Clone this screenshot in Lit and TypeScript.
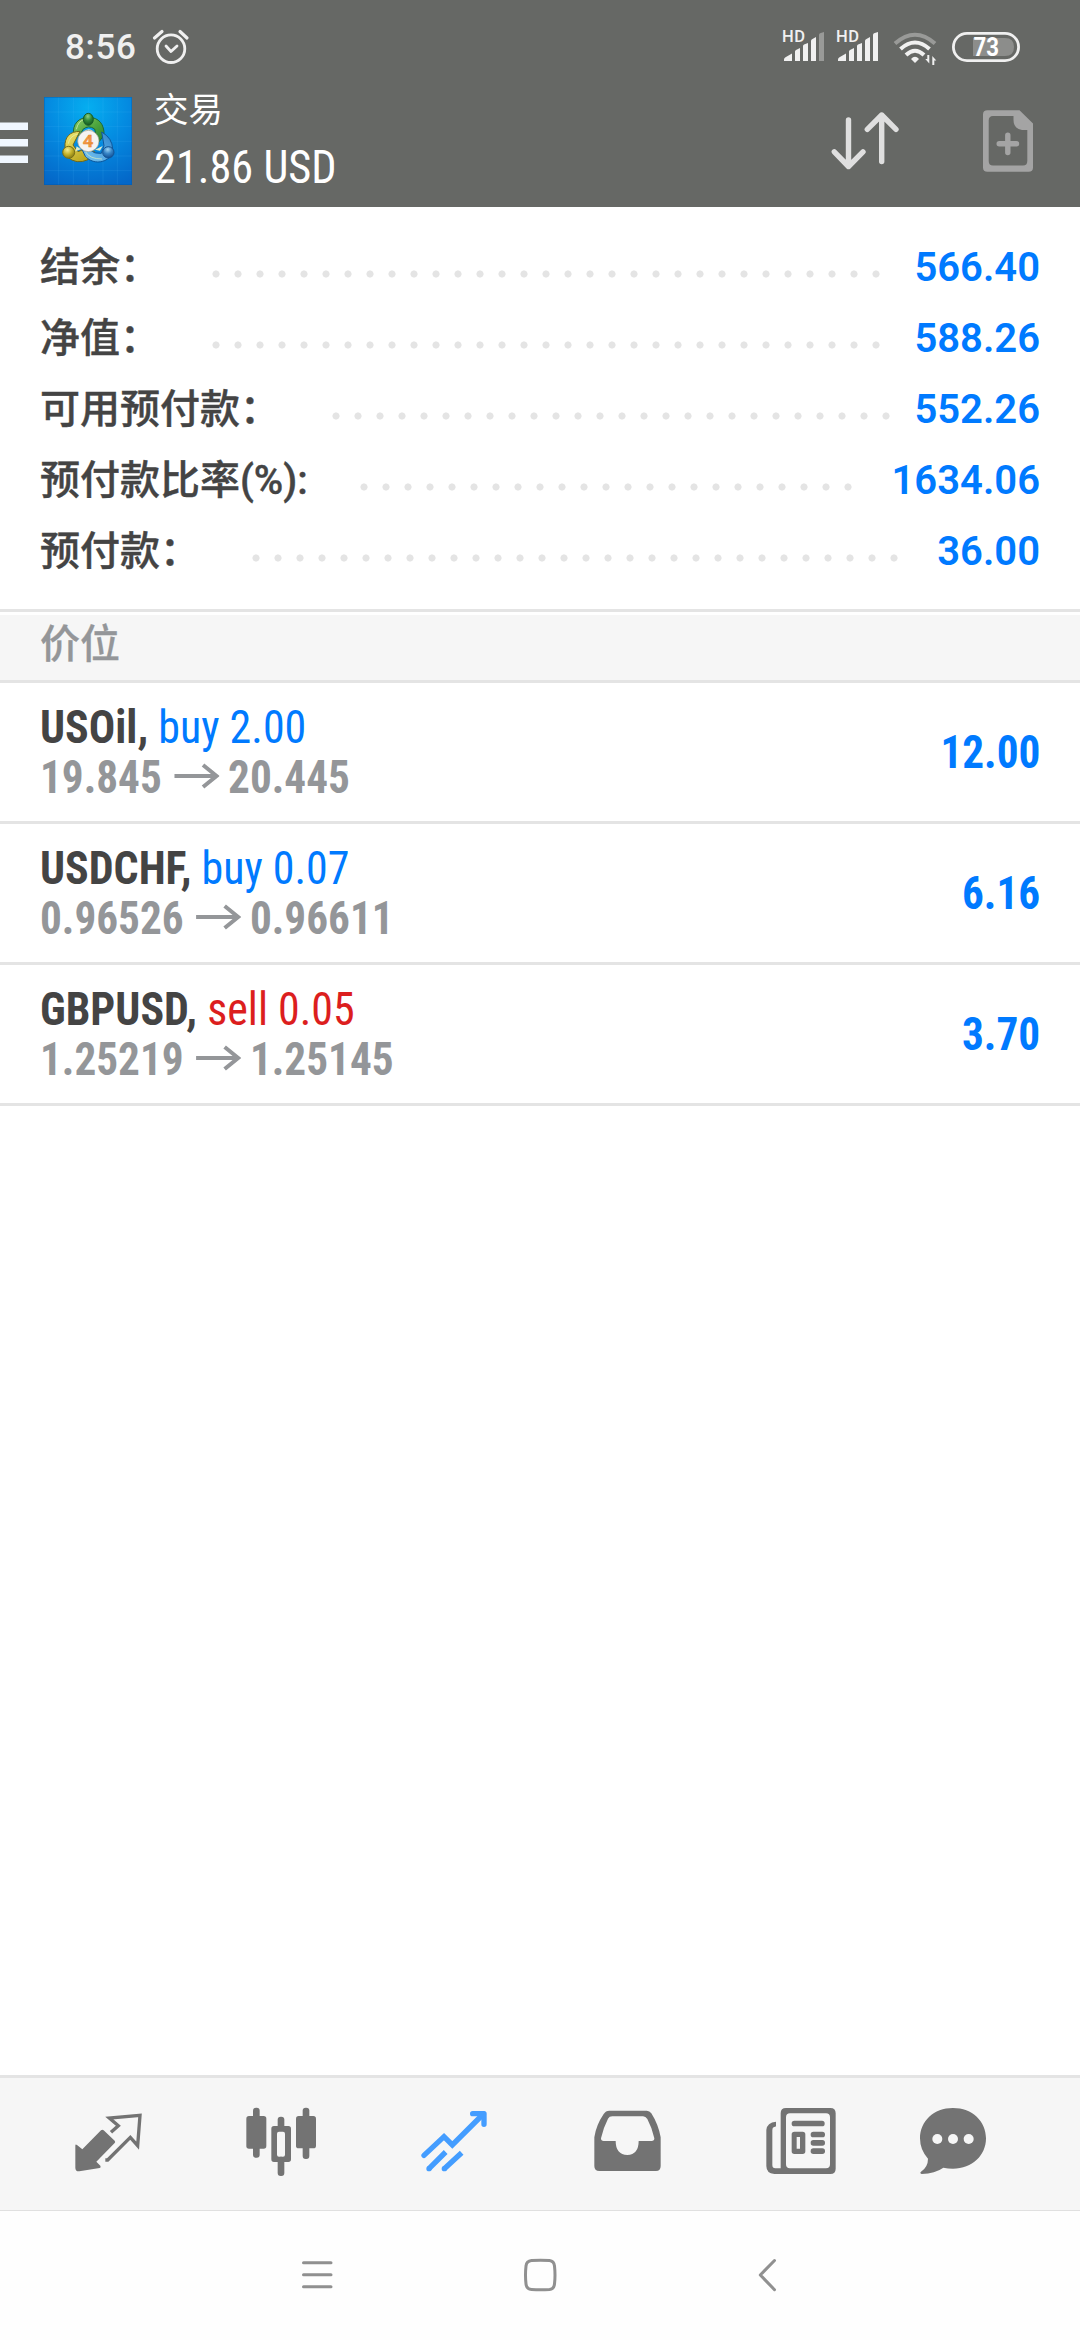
import { LitElement, html, css, svg } from "lit";
import { customElement } from "lit/decorators.js";

interface Metric { label: string; value: string; }
interface Position { symbol: string; side: "buy" | "sell"; volume: string; open: string; current: string; profit: string; }

const METRICS: Metric[] = [
  { label: "结余：", value: "566.40" },
  { label: "净值：", value: "588.26" },
  { label: "可用预付款：", value: "552.26" },
  { label: "预付款比率(%):", value: "1634.06" },
  { label: "预付款：", value: "36.00" },
];

const POSITIONS: Position[] = [
  { symbol: "USOil", side: "buy", volume: "2.00", open: "19.845", current: "20.445", profit: "12.00" },
  { symbol: "USDCHF", side: "buy", volume: "0.07", open: "0.96526", current: "0.96611", profit: "6.16" },
  { symbol: "GBPUSD", side: "sell", volume: "0.05", open: "1.25219", current: "1.25145", profit: "3.70" },
];

@customElement("status-bar")
class StatusBar extends LitElement {
  static styles = css`
    :host { display: flex; height: 80px; align-items: flex-start; justify-content: space-between; color: #f0f0f0; }
    .left { display: flex; padding-left: 65px; }
    .clock { font: 500 35px/40px Roboto, sans-serif; margin-top: 28px; width: 87px; letter-spacing: 0.7px; white-space: nowrap; }
    svg { display: block; }
    .hd { font: 500 16.5px Roboto, sans-serif; fill: #f0f0f0; }
    .level { font: 700 25px Roboto, sans-serif; fill: #fff; }
  `;
  private signal(dim: boolean) {
    return svg`
      <text class="hd" x="-1" y="42" textLength="23">HD</text>
      <path d="M1 61v-1.5q0-1.5 1.5-2.3L9 53.500V61z M12 61V51.500q0-1 1-1.600L17 48V61z M20 61V46q0-1 1-1.500L25 43V61z M28 61V41q0-1 1-1.700L33 37V61z" fill="#f0f0f0"/>
      <path d="M36 61V35q0-1 1-1.700L41 32V61z" fill=${dim ? "#999a98" : "#f0f0f0"}/>`;
  }
  render() {
    return html`
      <div class="left">
        <div class="clock">8:56</div>
        <svg width="38" height="80" viewBox="152 0 38 80" fill="none" stroke="#f0f0f0" stroke-width="2.8" stroke-linecap="round" stroke-linejoin="round">
          <circle cx="171" cy="48.700" r="13.800"/>
          <path d="M166 46l5 5.500 6-5.500"/>
          <path d="M154.500 38l7.500-6.500M180 31.500l7 6.500" stroke-width="3.200"/>
        </svg>
      </div>
      <svg width="300" height="80" viewBox="780 0 300 80">
        <g transform="translate(783 0)">${this.signal(true)}</g>
        <g transform="translate(837 0)">${this.signal(false)}</g>
        <g fill="none" stroke-width="4">
          <path d="M895 43.500Q915 26 935 43.500" stroke="#999a98"/>
          <path d="M900.500 49Q915 36 929.500 49" stroke="#f0f0f0"/>
          <path d="M906 55Q915 46.500 924 55" stroke="#f0f0f0"/>
        </g>
        <path d="M911 59Q915 54.500 919 59L915 63z" fill="#f0f0f0"/>
        <path d="M929.300 55v8.500l-4-4.500h2V55zM932.300 65v-9l4 4.500h-2V65z" fill="#f0f0f0"/>
        <path d="M973 38h32q9 0 9 9t-9 9h-32z" fill="#8c8d8b"/>
        <rect x="953.400" y="33.400" width="65.200" height="27.200" rx="13.600" fill="none" stroke="#f0f0f0" stroke-width="2.800"/>
        <text class="level" x="973.500" y="56" textLength="25.500" lengthAdjust="spacingAndGlyphs">73</text>
      </svg>`;
  }
}

@customElement("app-logo")
class AppLogo extends LitElement {
  static styles = css`
    :host { display: block; width: 88px; height: 88px; }
    svg { display: block; }
    .four { font: 700 52px Roboto, sans-serif; }
  `;
  render() {
    return html`<svg width="88" height="88" viewBox="42 36 264 264">
      <defs>
        <radialGradient id="bg" cx=".5" cy=".12" r=".95"><stop offset="0" stop-color="#05aef0"/><stop offset=".5" stop-color="#0489e0"/><stop offset="1" stop-color="#0467c8"/></radialGradient>
        <linearGradient id="g" x1="0" y1="0" x2="1" y2="1"><stop offset="0" stop-color="#93d069"/><stop offset=".5" stop-color="#4fa73f"/><stop offset="1" stop-color="#247c2e"/></linearGradient>
        <linearGradient id="y" x1="0" y1="0" x2=".6" y2="1"><stop offset="0" stop-color="#f2e873"/><stop offset="1" stop-color="#b9a51c"/></linearGradient>
        <linearGradient id="b" x1="1" y1="0" x2="0" y2="1"><stop offset="0" stop-color="#2d84cc"/><stop offset="1" stop-color="#7cc9f4"/></linearGradient>
        <radialGradient id="gh" cx=".45" cy=".25" r=".75"><stop offset="0" stop-color="#8fd084"/><stop offset=".5" stop-color="#2f8939"/><stop offset="1" stop-color="#12561f"/></radialGradient>
        <radialGradient id="yh" cx=".4" cy=".3" r=".75"><stop offset="0" stop-color="#f3eb91"/><stop offset=".5" stop-color="#c5b32b"/><stop offset="1" stop-color="#7f7410"/></radialGradient>
        <radialGradient id="bh" cx=".45" cy=".25" r=".75"><stop offset="0" stop-color="#9bd3f4"/><stop offset=".5" stop-color="#3684c6"/><stop offset="1" stop-color="#124e91"/></radialGradient>
      </defs>
      <rect x="42" y="36" width="264" height="264" fill="url(#bg)"/>
      <path d="M86 36V300M130 36V300M175 36V300M219 36V300M262 36V300M42 81H306M42 125H306M42 169H306M42 213H306M42 257H306" stroke="#62c2ff" stroke-opacity=".15" stroke-width="2.500"/>
      <rect x="43" y="37" width="262" height="262" fill="none" stroke="#0758a5" stroke-opacity=".6" stroke-width="2"/>
      <g stroke-width="3" stroke-linejoin="round">
        <path d="M131 151C126 117 146 97 176 97S224 118 222 151L204 174 194 132Q176 119 159 133L149 153z" fill="url(#g)" stroke="#1d6837"/>
        <path d="M150 139C119 139 103 157 105 187L112 216Q140 240 174 224L194 200 170 190 144 200 129 180z" fill="url(#y)" stroke="#6e681b"/>
        <path d="M215 141Q247 159 248 192L242 214C218 239 184 234 166 214L153 187 177 193Q194 208 214 205L222 182z" fill="url(#b)" stroke="#0d579c"/>
        <path d="M139 133Q145 107 164 103M115 176Q119 153 143 147M167 201Q179 222 216 222" fill="none" stroke="#e5f5bd" stroke-opacity=".65"/>
        <path d="M162 139Q177 126 190 139M136 199L140 184 153 193M218 183L210 197 195 194" fill="#dcebd0" stroke="none"/>
        <ellipse cx="175" cy="103" rx="15" ry="18" fill="url(#gh)" stroke="#175d29"/>
        <circle cx="116" cy="202" r="18" fill="url(#yh)" stroke="#786f18"/>
        <circle cx="235" cy="202" r="17" fill="url(#bh)" stroke="#135394"/>
      </g>
      <circle cx="175" cy="168" r="32" fill="#f5f4f2" stroke="#9d9d88" stroke-width="2"/>
      <text class="four" x="174" y="187" text-anchor="middle" textLength="32" lengthAdjust="spacingAndGlyphs" fill="#f39a48" stroke="#e58020" stroke-width="1">4</text>
    </svg>`;
  }
}

@customElement("title-bar")
class TitleBar extends LitElement {
  static styles = css`
    :host { display: flex; height: 127px; color: #fff; }
    svg { display: block; flex: none; }
    app-logo { margin: 17px 0 0 16px; }
    .titles { margin-left: 22px; flex: 1; }
    .page { font: 400 34.5px/40px "Noto Sans CJK SC", sans-serif; margin-top: 7px; }
    .total { font: 400 46px/54px "Roboto Condensed", Roboto, sans-serif; font-stretch: 75%; margin-top: 13px; white-space: nowrap; transform: scaleX(0.964); transform-origin: 0 0; }
  `;
  render() {
    return html`
      <svg width="28" height="127" viewBox="0 80 28 127" fill="#f0f7ff"><path d="M0 122.500H28V130H0zM0 139H28V146.500H0zM0 155.500H28V163H0z"/></svg>
      <app-logo></app-logo>
      <div class="titles"><div class="page">交易</div><div class="total">21.86 USD</div></div>
      <svg width="260" height="127" viewBox="820 80 260 127" fill="none" stroke-linecap="round" stroke-linejoin="round">
        <path d="M848.500 120V166.500M834.300 151.800L848.500 166.500 863 151.800M881.700 161.500V115M867.300 129.300L881.700 115 896 129.300" stroke="#dfdfdf" stroke-width="5.400"/>
        <path fill-rule="evenodd" d="M987.500 110.300H1019.500L1033 123.500V167.500Q1033 171.800 1028.500 171.800H987.500Q983 171.800 983 167.500V114.500Q983 110.300 987.500 110.300zM993 116Q988.700 116 988.700 120.500V161Q988.700 165.500 993 165.500H1023Q1027.300 165.500 1027.300 161V130H1022Q1013.500 128.500 1013.500 120V116z" fill="#a4a4a4"/>
        <path d="M999.200 143.800H1016.500M1007.800 135.200V152.500" stroke="#a4a4a4" stroke-width="5.400"/>
      </svg>`;
  }
}

@customElement("account-summary")
class AccountSummary extends LitElement {
  static styles = css`
    :host { display: block; height: 405px; box-sizing: border-box; padding: 25px 40px 0; border-bottom: 3px solid #e4e4e4; }
    .row { display: flex; height: 71px; align-items: center; font: 500 40px/60px Roboto, "Noto Sans CJK SC", sans-serif; white-space: nowrap; }
    .label { color: #444; -webkit-text-stroke: 0.4px #444; }
    .leader { flex: 1; margin: 13px 12px 0 45px; }
    .dots { height: 8px; width: round(down, 100%, 22px); background: radial-gradient(circle at 11px 4px, #e4e4e4 3.200px, transparent 3.900px) 0 0 / 22px 8px repeat-x; }
    .value { color: #007aff; font-weight: 650; }
  `;
  render() {
    return METRICS.map(m => html`<div class="row"><span class="label">${m.label}</span><span class="leader"><div class="dots"></div></span><span class="value">${m.value}</span></div>`);
  }
}

@customElement("position-list")
class PositionList extends LitElement {
  static styles = css`
    :host { display: block; flex: 1; padding-top: 3px; }
    .heading { height: 68px; box-sizing: border-box; padding-left: 40px; background: #f6f6f6; border-bottom: 3px solid #e4e4e4; color: #949699; font: 500 40px/53px "Noto Sans CJK SC", sans-serif; -webkit-text-stroke: 0.3px #949699; }
    .item { display: flex; height: 141px; box-sizing: border-box; padding: 0 40px; justify-content: space-between; align-items: center; border-bottom: 3px solid #e4e4e4; font: 700 46px/50px "Roboto Condensed", Roboto, sans-serif; font-stretch: 75%; white-space: nowrap; }
    .deal { color: #444; transform: scaleX(0.955); transform-origin: 0 0; }
    .buy, .sell { font-weight: 400; }
    .buy, .profit { color: #007aff; }
    .sell { color: #dc1e1e; }
    .prices { display: flex; color: #949699; transform: scaleX(0.94); transform-origin: 0 0; }
    .profit { transform: scaleX(0.94); transform-origin: 100% 0; }
    .arrow { margin: 0 9.5px 0 12px; width: 49px; height: 50px; }
  `;
  render() {
    return html`<div class="heading">价位</div>
      ${POSITIONS.map(p => html`<div class="item">
        <div>
          <div class="deal">${p.symbol}, <span class=${p.side}>${p.side} ${p.volume}</span></div>
          <div class="prices"><span>${p.open}</span><svg class="arrow" viewBox="0 0 46 50" preserveAspectRatio="none" fill="none" stroke="#949699" stroke-width="4"><path d="M1 24H43M29.500 13L43 24 29.500 35"/></svg><span>${p.current}</span></div>
        </div>
        <div class="profit">${p.profit}</div>
      </div>`)}`;
  }
}

@customElement("tab-bar")
class TabBar extends LitElement {
  static styles = css`
    :host { display: grid; grid-template-columns: repeat(5, 173px) 130px; height: 136px; box-sizing: border-box; padding-left: 22px; background: #f6f6f6; border-top: 3px solid #e4e4e4; border-bottom: 1px solid #e0e0e0; }
    svg { display: block; width: 100%; height: 132px; fill: #737373; }
  `;
  render() {
    return html`
      <svg viewBox="66 54 519 396">
        <path d="M226 257Q226 251 231 255L247 268 303 211Q307 208 311 211L344 242Q347 246 344 249L289 305 301 317Q304 323 299 324L238 334Q226 335 226 323z"/>
        <path d="M333 217L355 197 328 174 420 166 413 257 391 232 323 300H316" fill="none" stroke="#737373" stroke-width="10"/>
      </svg>
      <svg viewBox="585 54 519 396">
        <rect x="759" y="143" width="20" height="150" rx="9"/><rect x="739" y="168" width="60" height="98" rx="8"/>
        <rect x="833" y="170" width="20" height="40" rx="9"/><rect x="833" y="290" width="20" height="58" rx="9"/>
        <path fill-rule="evenodd" d="M822 198H865Q873 198 873 206V298Q873 306 865 306H822Q814 306 814 298V206Q814 198 822 198zM837 215Q831 215 831 221V284Q831 290 837 290H849Q855 290 855 284V221Q855 215 849 215z"/>
        <rect x="908" y="143" width="20" height="154" rx="9"/><rect x="888" y="168" width="60" height="97" rx="8"/>
      </svg>
      <svg viewBox="24 54 519 396">
        <g fill="none" stroke="#449dff" stroke-width="16" stroke-linecap="round" stroke-linejoin="round"><path d="M192 286L252 230 277 255 370 162" stroke-linejoin="miter"/><path d="M338 161H372V193"/></g>
        <path d="M207 326L257 276M253 326L305 278" fill="none" stroke="#449dff" stroke-width="16"/><circle cx="207" cy="326" r="8" fill="#449dff"/><circle cx="253" cy="326" r="8" fill="#449dff"/>
      </svg>
      <svg viewBox="543 54 519 396">
        <path fill-rule="evenodd" d="M748 152H860Q869 152 874 160Q895 193 902 232V318Q902 333 888 333H718Q703 333 703 318V232Q708 196 731 162Q737 152 748 152zM757 169Q748 169 744 176Q730 203 723 235Q723 243 731 243H767Q767 284 802 285Q836 284 836 243H875Q883 243 883 235Q876 203 862 177Q857 169 849 169z"/>
      </svg>
      <svg viewBox="-18 54 519 396">
        <path fill-rule="evenodd" d="M198 144H331Q347 144 347 160V326Q347 342 331 342H163Q139 340 139 318V210Q141 187 168 185V197Q168 201 162 201Q157 203 157 210V315Q157 325 166 325H182V160Q182 144 198 144zM210 160Q198 160 198 172V313Q198 325 210 325H318Q330 325 330 313V172Q330 160 318 160z"/>
        <rect x="215" y="182" width="99" height="17" rx="8"/>
        <path fill-rule="evenodd" d="M223 215H248Q256 215 256 223V274Q256 282 248 282H223Q215 282 215 274V223Q215 215 223 215zM230 231V266H240V231z"/>
        <rect x="272" y="215" width="43" height="17" rx="8"/><rect x="272" y="240" width="43" height="17" rx="8"/><rect x="272" y="265" width="43" height="17" rx="8"/>
      </svg>
      <svg viewBox="501 54 390 396">
        <path d="M699 144C757 144 798 184 798 235S757 326 699 326Q684 326 670 323Q645 341 605 342Q598 339 603 335Q624 321 624 296Q600 270 600 235C600 184 641 144 699 144z"/>
        <g fill="#f6f6f6"><circle cx="652" cy="237" r="15"/><circle cx="699" cy="237" r="15"/><circle cx="746" cy="237" r="15"/></g>
      </svg>`;
  }
}

@customElement("nav-bar")
class NavBar extends LitElement {
  static styles = css`
    :host { display: flex; height: 129px; box-sizing: border-box; align-items: flex-start; justify-content: space-between; padding: 44px 296px 0 299px; background: #fefefe; }
    svg { display: block; width: 36px; height: 40px; fill: none; stroke: #909090; stroke-width: 3; stroke-linecap: round; stroke-linejoin: round; }
  `;
  render() {
    return html`
      <svg viewBox="299 2255 36 40"><path d="M303.500 2262.700H331M303.500 2274.800H331M303.500 2286.800H331"/></svg>
      <svg viewBox="523.500 2255 36 40"><path d="M531 2260.500Q540 2259.800 549 2260.500 553.500 2261 554 2266 555 2275 554 2284 553.500 2289 549 2289.500 540 2290.200 531 2289.500 526 2289 525.500 2284 524.500 2275 525.500 2266 526 2261 531 2260.500z"/></svg>
      <svg viewBox="748 2255 36 40"><path d="M774.500 2260.500L760.300 2275 774.500 2289.700"/></svg>`;
  }
}

@customElement("app-root")
class AppRoot extends LitElement {
  static styles = css`
    :host { display: flex; flex-direction: column; width: 1080px; height: 2340px; background: #fff; overflow: hidden; }
    .top { background: #666865; }
  `;
  render() {
    return html`
      <div class="top"><status-bar></status-bar><title-bar></title-bar></div>
      <account-summary></account-summary>
      <position-list></position-list>
      <tab-bar></tab-bar>
      <nav-bar></nav-bar>`;
  }
}
